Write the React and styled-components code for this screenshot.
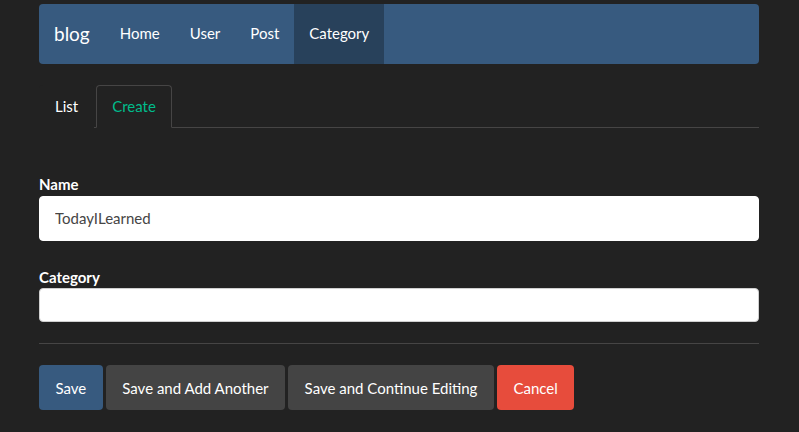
import React from "react";
import styled, { createGlobalStyle } from "styled-components";

const Global = createGlobalStyle`
  html, body { margin: 0; padding: 0; background: #222222; }
  body { font-family: Lato, "Open Sans", sans-serif; font-size: 15px; line-height: 21.4px; color: #ffffff; }
  * { box-sizing: border-box; }
`;

const Container = styled.div`
  width: 720px;
  margin-left: calc(50% - 360.5px);
  padding-top: 4px;
`;

const Navbar = styled.nav`
  display: flex;
  align-items: stretch;
  height: 60px;
  background: #375a7f;
  border-radius: 4px;
  margin-bottom: 21px;
  overflow: hidden;
`;

const Brand = styled.a`
  display: flex;
  align-items: center;
  padding: 0 15px;
  font-size: 19px;
  color: #ffffff;
  text-decoration: none;
`;

const NavLink = styled.a`
  display: flex;
  align-items: center;
  padding: 0 15px;
  color: #ffffff;
  text-decoration: none;
  background: ${(p) => (p.$active ? "#28415b" : "transparent")};
`;

const Tabs = styled.div`
  display: flex;
  border-bottom: 1px solid #464545;
  margin-bottom: 41px;
`;

const Tab = styled.a`
  display: block;
  margin-right: 2px;
  margin-bottom: -1px;
  padding: 10px 15px;
  line-height: 21.4px;
  border: 1px solid ${(p) => (p.$active ? "#464545" : "transparent")};
  border-bottom-color: ${(p) => (p.$active ? "#222222" : "transparent")};
  border-radius: 4px 4px 0 0;
  background: #222222;
  color: ${(p) => (p.$active ? "#00bc8c" : "#ffffff")};
  text-decoration: none;
`;

const FormGroup = styled.div`
  margin-bottom: 21px;
`;

const Label = styled.label`
  display: block;
  font-weight: 700;
  padding-top: 5px;
  margin-bottom: 0;
  color: #ffffff;
`;

const Input = styled.input`
  display: block;
  width: 100%;
  height: ${(p) => p.$h}px;
  padding: 10px 15px;
  font-family: Lato, "Open Sans", sans-serif;
  font-size: 15px;
  color: #464545;
  background: #ffffff;
  border: 1px solid ${(p) => (p.$h < 40 ? "#cfcfcf" : "#ffffff")};
  border-radius: 4px;
  outline: none;
`;

const Rule = styled.hr`
  border: 0;
  border-top: 1px solid #464545;
  margin: 0 0 21px 0;
`;

const Actions = styled.div`
  display: flex;
  gap: 3px;
`;

const Button = styled.button`
  height: 45px;
  padding: 0 16.5px;
  font-family: Lato, "Open Sans", sans-serif;
  font-size: 15px;
  color: #ffffff;
  border: 0;
  border-radius: 4px;
  background: ${(p) => p.$bg};
  cursor: pointer;
`;

export default function App() {
  return (
    <>
      <Global />
      <Container>
        <Navbar>
          <Brand href="#">blog</Brand>
          <NavLink href="#">Home</NavLink>
          <NavLink href="#">User</NavLink>
          <NavLink href="#">Post</NavLink>
          <NavLink href="#" $active>Category</NavLink>
        </Navbar>
        <Tabs>
          <Tab href="#">List</Tab>
          <Tab href="#" $active>Create</Tab>
        </Tabs>
        <FormGroup>
          <Label>Name</Label>
          <Input $h={45} defaultValue="TodayILearned" />
        </FormGroup>
        <FormGroup>
          <Label>Category</Label>
          <Input $h={34} defaultValue="" />
        </FormGroup>
        <Rule />
        <Actions>
          <Button $bg="#375a7f">Save</Button>
          <Button $bg="#444444">Save and Add Another</Button>
          <Button $bg="#444444">Save and Continue Editing</Button>
          <Button $bg="#e74c3c">Cancel</Button>
        </Actions>
      </Container>
    </>
  );
}
